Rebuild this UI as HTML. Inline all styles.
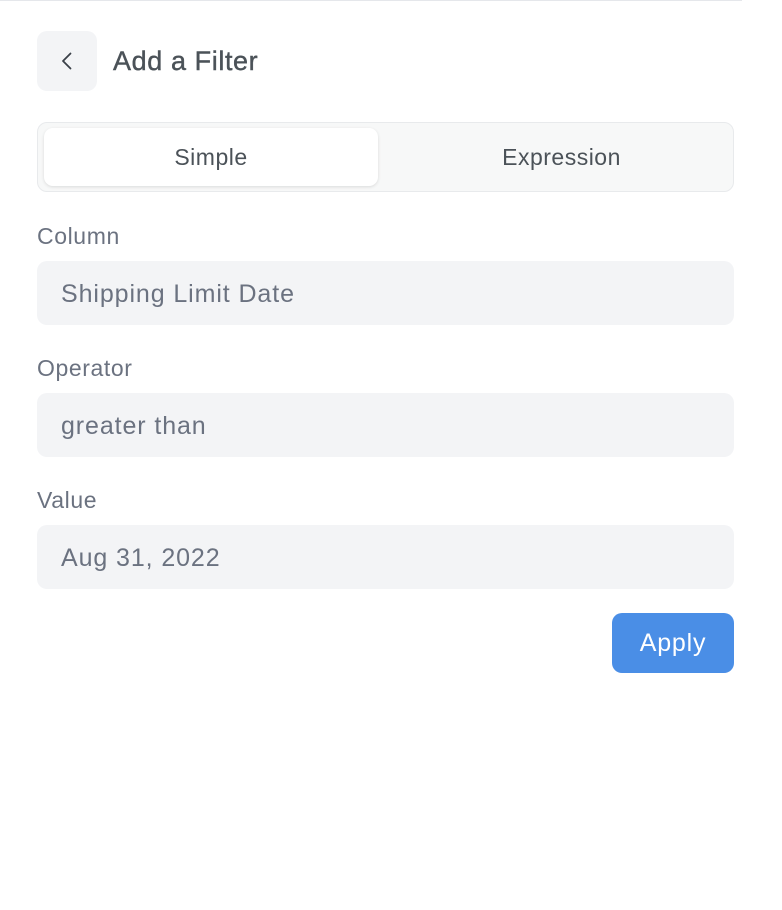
<!DOCTYPE html>
<html><head><style>
*{box-sizing:border-box;margin:0;padding:0}
body{width:782px;height:910px;background:#fff;font-family:"Liberation Sans",sans-serif;position:relative;overflow:hidden}
.top{position:absolute;left:0;top:0;width:742px;height:1px;background:#e5e7eb}
.back{position:absolute;left:37px;top:31px;width:60px;height:60px;border-radius:10px;background:#f3f4f6}
.title{position:absolute;left:113px;top:44px;font-size:27px;color:#4b5258;line-height:34px;letter-spacing:0.6px;-webkit-text-stroke:0.4px #4b5258}
.seg{position:absolute;left:37px;top:122px;width:697px;height:70px;border:1.5px solid #e8eaec;border-radius:10px;background:#f7f8f8}
.act{position:absolute;left:6px;top:5px;width:334px;height:58px;background:#fff;border-radius:9px;box-shadow:0 1px 3px rgba(0,0,0,.12)}
.tl{position:absolute;top:20px;font-size:23px;color:#4b5258;line-height:28px;text-align:center;letter-spacing:0.5px}
.lbl{position:absolute;left:37px;font-size:23px;color:#6b7280;line-height:26px;letter-spacing:0.6px}
.inp{position:absolute;left:37px;width:697px;height:64px;border-radius:10px;background:#f3f4f6;font-size:25px;color:#6b7280;padding-left:24px;line-height:66px;letter-spacing:0.9px}
.btn{position:absolute;left:612px;top:613px;width:122px;height:60px;border-radius:10px;background:#4a8ee6;color:#fff;font-size:25px;line-height:60px;text-align:center;letter-spacing:0.8px}
</style></head><body>
<div class="top"></div>
<div class="back"><svg width="60" height="60" viewBox="0 0 60 60"><path d="M33.5 22.5L26 30l7.5 7.5" stroke="#3a4048" stroke-width="1.8" fill="none" stroke-linecap="round" stroke-linejoin="round"/></svg></div>
<div class="title">Add a Filter</div>
<div class="seg"><div class="act"></div>
<div class="tl" style="left:6px;width:334px">Simple</div>
<div class="tl" style="left:350px;width:347px">Expression</div></div>
<div class="lbl" style="top:223px">Column</div>
<div class="inp" style="top:261px">Shipping Limit Date</div>
<div class="lbl" style="top:355px">Operator</div>
<div class="inp" style="top:393px">greater than</div>
<div class="lbl" style="top:487px">Value</div>
<div class="inp" style="top:525px">Aug 31, 2022</div>
<div class="btn">Apply</div>
</body></html>
